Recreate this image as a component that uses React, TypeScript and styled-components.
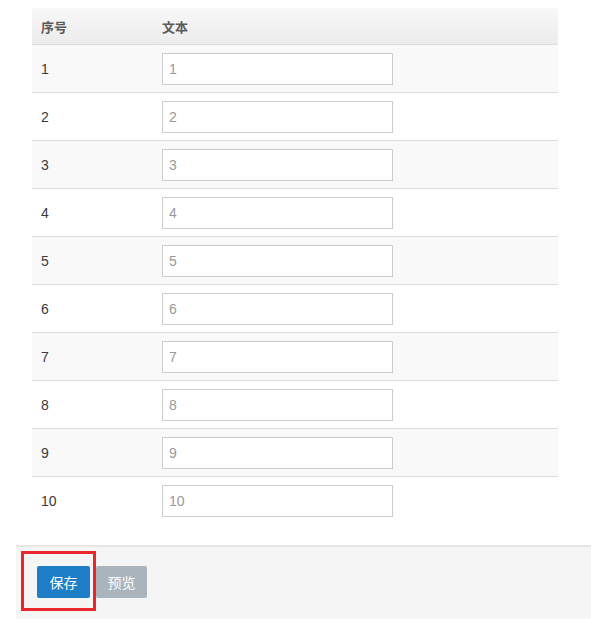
import React from "react";
import styled, { createGlobalStyle } from "styled-components";

const GlobalStyle = createGlobalStyle`
  html, body {
    margin: 0;
    padding: 0;
    background: #fff;
    font-family: "Liberation Sans", "Noto Sans CJK SC", sans-serif;
    color: #333;
  }
`;

const Page = styled.div`
  padding: 8px 0 0 16px;
`;

const Table = styled.table`
  width: 526px;
  margin: 0 0 20px 16px;
  border-collapse: collapse;
  font-size: 14px;
`;

const HeadCell = styled.th`
  height: 36px;
  padding: 0 9px;
  text-align: left;
  font-size: 13px;
  font-weight: bold;
  color: #5a5a5a;
  background: linear-gradient(to bottom, #f8f8f8, #ececec);
  border-bottom: 1px solid #ddd;
`;

const Row = styled.tr<{ $striped: boolean; $last: boolean }>`
  background: ${({ $striped }) => ($striped ? "#f9f9f9" : "#fff")};
  border-bottom: ${({ $last }) => ($last ? "none" : "1px solid #ddd")};
`;

const Cell = styled.td`
  height: 48px;
  padding: 0 9px;
  box-sizing: border-box;
  vertical-align: middle;
  color: #3a3a3a;
`;

const TextInput = styled.input`
  display: block;
  width: 231px;
  height: 32px;
  box-sizing: border-box;
  padding: 0 6px;
  border: 1px solid #ccc;
  background: #fff;
  font-family: "Liberation Sans", "Noto Sans CJK SC", sans-serif;
  font-size: 14px;
  color: #999;
  outline: none;
`;

const Footer = styled.div`
  position: relative;
  height: 74px;
  box-sizing: border-box;
  padding: 19px 0 0 21px;
  background: #f5f5f5;
  border-top: 2px solid #e6e6e6;
  display: flex;
  gap: 6px;
`;

const Button = styled.button<{ $variant: "primary" | "muted" }>`
  height: 32px;
  padding: 0 10px;
  border: none;
  border-radius: 2px;
  font-family: "Noto Sans CJK SC", sans-serif;
  font-size: 14px;
  color: #fff;
  background: ${({ $variant }) => ($variant === "primary" ? "#1e7ec8" : "#a9b4bd")};
  cursor: pointer;
  width: ${({ $variant }) => ($variant === "primary" ? "53px" : "51px")};
`;

const Highlight = styled.div`
  position: absolute;
  left: 5px;
  top: 4px;
  width: 75px;
  height: 60px;
  box-sizing: border-box;
  border: 3px solid #e8262b;
  pointer-events: none;
`;

const rows = Array.from({ length: 10 }, (_, i) => i + 1);

export default function App() {
  return (
    <Page>
      <GlobalStyle />
      <Table>
        <colgroup>
          <col style={{ width: 121 }} />
          <col style={{ width: 249 }} />
          <col />
        </colgroup>
        <thead>
          <tr>
            <HeadCell>序号</HeadCell>
            <HeadCell>文本</HeadCell>
            <HeadCell />
          </tr>
        </thead>
        <tbody>
          {rows.map((n, i) => (
            <Row key={n} $striped={i % 2 === 0} $last={n === rows.length}>
              <Cell>{n}</Cell>
              <Cell>
                <TextInput defaultValue={String(n)} />
              </Cell>
              <Cell />
            </Row>
          ))}
        </tbody>
      </Table>
      <Footer>
        <Button $variant="primary">保存</Button>
        <Button $variant="muted">预览</Button>
        <Highlight />
      </Footer>
    </Page>
  );
}
